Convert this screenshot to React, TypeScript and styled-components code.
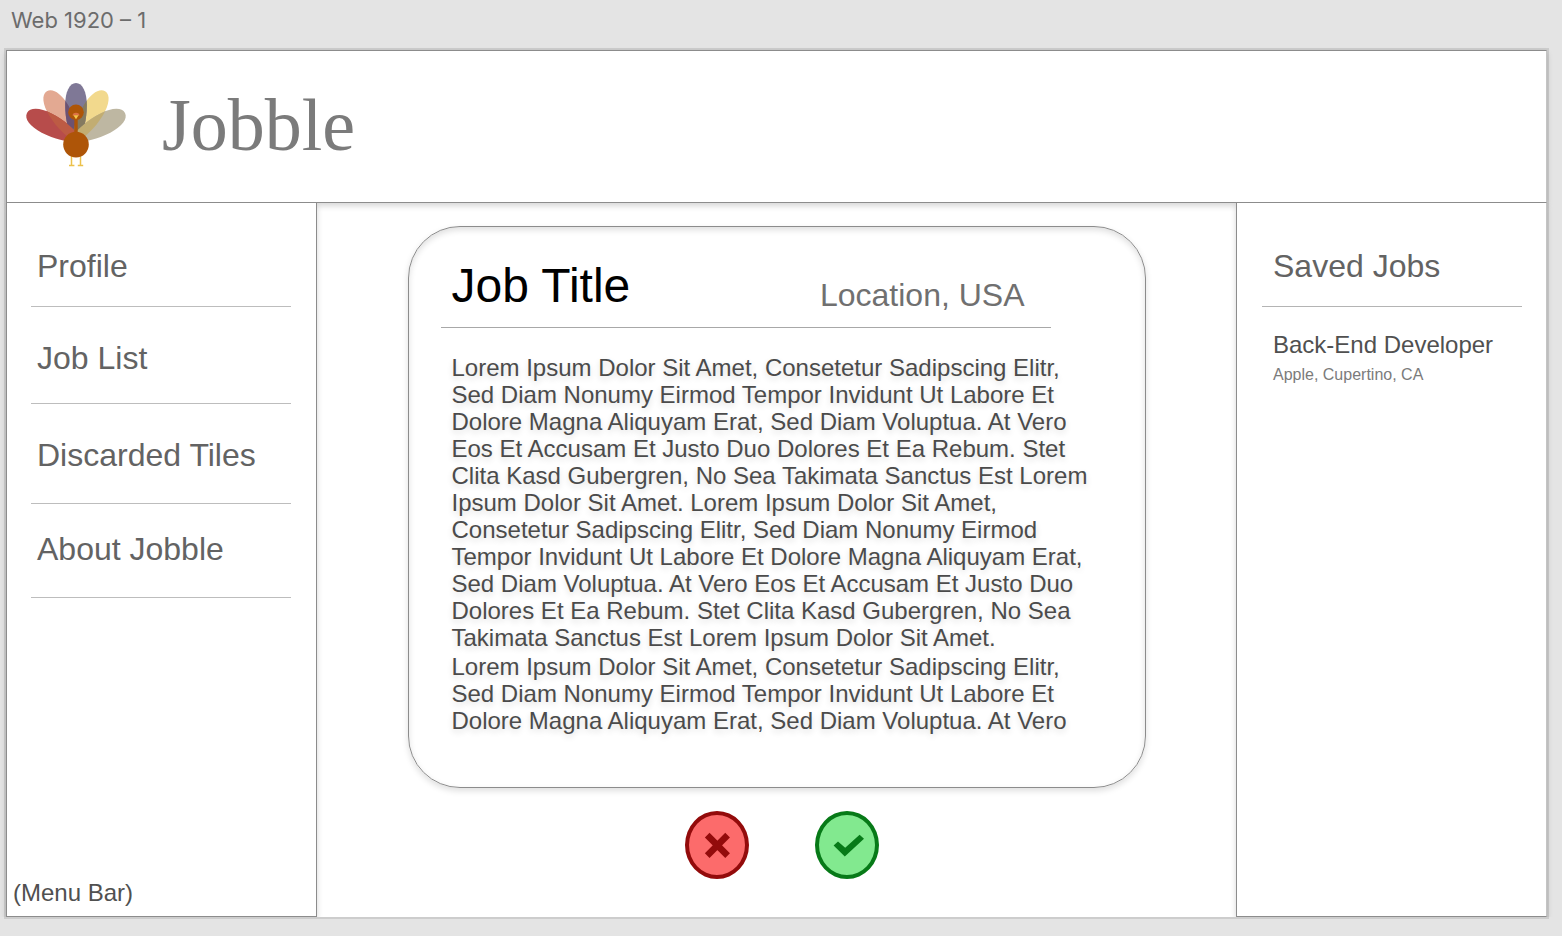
import React from "react";
import styled, { createGlobalStyle } from "styled-components";

const line = "#8c8c8c";

const GlobalStyle = createGlobalStyle`
  *, *::before, *::after { box-sizing: border-box; }
  body {
    margin: 0;
    background: #e4e4e4;
    font-family: "Liberation Sans", Arial, Helvetica, sans-serif;
  }
  h1, h2, h3, p, ul { margin: 0; padding: 0; font-weight: 400; }
`;

const Page = styled.div`
  min-height: 100vh;
  display: flex;
  flex-direction: column;
  padding: 0 13px 17px 4px;
`;

const ArtboardName = styled.p`
  height: 48px;
  padding: 6px 7px;
  font-family: Inter, "Open Sans", sans-serif;
  font-size: 22px;
  line-height: 28px;
  color: #6c6c6c;
`;

const Artboard = styled.div`
  flex: 1;
  display: flex;
  flex-direction: column;
  border: 2px solid #cdcdcd;
  background: #fff;
`;

const Header = styled.header`
  position: relative;
  display: flex;
  align-items: center;
  gap: 36px;
  height: 153px;
  padding: 0 19px 4px;
  border: 1px solid ${line};
  border-right-color: #c4c4c4;
  box-shadow: 0 3px 6px rgba(0, 0, 0, 0.16);
`;

const Brand = styled.h1`
  font-family: "Liberation Serif", "Times New Roman", serif;
  font-size: 74px;
  line-height: 84px;
  color: #7b7b7b;
`;

const Columns = styled.div`
  flex: 1;
  display: flex;
`;

const SidePanel = styled.aside`
  position: relative;
  flex: none;
  display: flex;
  flex-direction: column;
  width: 311px;
  padding-top: 45px;
  background: #fff;
  border: 1px solid ${line};
  border-top: 0;
  box-shadow: 0 3px 6px rgba(0, 0, 0, 0.16);
  clip-path: inset(0 -10px 0 -10px);
`;

const SavedPanel = styled(SidePanel)`
  border-right-color: #c4c4c4;
`;

const MenuList = styled.ul`
  list-style: none;
`;

const MenuItem = styled.li<{ $above: number; $below: number }>`
  margin: 0 25px 0 24px;
  padding: ${(p) => p.$above}px 0 ${(p) => p.$below}px 6px;
  border-bottom: 1px solid #bdbdbd;
  font-size: 32px;
  line-height: 36px;
  color: #636363;
`;

const MenuLink = styled.a`
  color: inherit;
  text-decoration: none;
`;

const MenuCaption = styled.p`
  margin-top: auto;
  padding: 0 6px 10px;
  font-size: 24px;
  line-height: 27px;
  color: #505050;
`;

const SavedHeading = styled.h2`
  margin: 0 24px 0 25px;
  padding: 0 0 22px 11px;
  border-bottom: 1px solid #b4b4b4;
  font-size: 32px;
  line-height: 36px;
  color: #636363;
`;

const SavedJob = styled.article`
  padding: 24px 24px 0 36px;
`;

const SavedTitle = styled.h3`
  font-size: 24px;
  line-height: 27px;
  color: #505050;
`;

const SavedPlace = styled.p`
  padding-top: 7px;
  font-size: 16px;
  line-height: 20px;
  color: #7b7b7b;
`;

const Main = styled.main`
  flex: 1;
  display: flex;
  flex-direction: column;
  align-items: center;
  padding: 23px 24px;
`;

const JobCard = styled.article`
  width: 100%;
  max-width: 738px;
  padding: 31px 32px 53px;
  border: 1px solid ${line};
  border-radius: 52px;
  box-shadow: 0 3px 6px rgba(0, 0, 0, 0.13), inset 0 3px 6px rgba(0, 0, 0, 0.13);
`;

const JobHeader = styled.header`
  display: flex;
  align-items: flex-end;
  justify-content: space-between;
  max-width: 610px;
  padding: 0 26px 13px 11px;
  border-bottom: 1px solid #a8a8a8;
`;

const JobTitle = styled.h2`
  font-size: 48px;
  line-height: 56px;
  color: #000;
`;

const JobPlace = styled.p`
  font-size: 32px;
  line-height: 38px;
  color: #707070;
`;

const JobText = styled.div`
  display: flex;
  flex-direction: column;
  gap: 2px;
  max-width: 660px;
  padding: 26px 0 0 11px;
  font-size: 24px;
  line-height: 27px;
  color: #4b4b4b;
  text-shadow: 0 3px 6px rgba(0, 0, 0, 0.14);
`;

const Actions = styled.div`
  display: flex;
  gap: 66px;
  padding: 23px 0 0 11px;
`;

const RoundButton = styled.button<{ $fill: string; $ink: string }>`
  display: flex;
  align-items: center;
  justify-content: center;
  width: 64px;
  height: 68px;
  padding: 0;
  border: 4px solid ${(p) => p.$ink};
  border-radius: 50%;
  background: ${(p) => p.$fill};
  color: ${(p) => p.$ink};
  cursor: pointer;
`;

const Turkey = styled.svg`
  flex: none;
  width: 100px;
  height: 84px;
  overflow: visible;
`;

const featherShape =
  "M50 0 C56.5 0 60.8 9 60.8 22 C60.8 37 57.5 48 53.5 57 H46.5 C42.5 48 39.2 37 39.2 22 C39.2 9 43.5 0 50 0 Z";

const turn = (angle: number) => `rotate(${angle} 50 55)`;

const feathers = [
  { id: "rose", color: "#e3a992", angle: -32 },
  { id: "gold", color: "#f2d98d", angle: 32 },
  { id: "plum", color: "#7f7896", angle: 0 },
  { id: "red", color: "#b74c4b", angle: -63 },
  { id: "sand", color: "#beb7a2", angle: 63 },
];

// Darker tints where two neighbouring feathers cross.
const crossings = [
  { inside: "rose", angle: 0, color: "#6c5272" },
  { inside: "gold", angle: 0, color: "#857a60" },
  { inside: "rose", angle: -63, color: "#bd5b44" },
  { inside: "gold", angle: 63, color: "#c2ad72" },
];

function TurkeyLogo() {
  return (
    <Turkey viewBox="0 0 100 84" role="img" aria-label="Turkey">
      <defs>
        {feathers.map((f) => (
          <clipPath key={f.id} id={`feather-${f.id}`}>
            <path d={featherShape} transform={turn(f.angle)} />
          </clipPath>
        ))}
      </defs>
      {feathers.map((f) => (
        <path key={f.id} d={featherShape} fill={f.color} transform={turn(f.angle)} />
      ))}
      {crossings.map((c) => (
        <g key={c.color} clipPath={`url(#feather-${c.inside})`}>
          <path d={featherShape} fill={c.color} transform={turn(c.angle)} />
        </g>
      ))}
      <g stroke="#ecc14b" strokeWidth="1.5" fill="none">
        <path d="M45.5 72V82.6M43 82.6H48.4M54.5 72V82.6M51.8 82.6H57.2" />
      </g>
      <rect x="48.3" y="33" width="3.4" height="20" fill="#ae5508" />
      <circle cx="50" cy="29.2" r="7.8" fill="#ae5508" />
      <circle cx="50" cy="61.6" r="12.8" fill="#ae5508" />
      <path d="M46.6 32.6A3.4 2.8 0 0 1 53.4 32.6Z" fill="#dc7245" />
      <path d="M47.4 32.2H52.6L50 36.2Z" fill="#f3c64c" />
    </Turkey>
  );
}

const menu = [
  { label: "Profile", above: 0, below: 22 },
  { label: "Job List", above: 33, below: 27 },
  { label: "Discarded Tiles", above: 33, below: 30 },
  { label: "About Jobble", above: 27, below: 30 },
];

const paragraphs = [
  "Lorem Ipsum Dolor Sit Amet, Consetetur Sadipscing Elitr, Sed Diam Nonumy Eirmod Tempor Invidunt Ut Labore Et Dolore Magna Aliquyam Erat, Sed Diam Voluptua. At Vero Eos Et Accusam Et Justo Duo Dolores Et Ea Rebum. Stet Clita Kasd Gubergren, No Sea Takimata Sanctus Est Lorem Ipsum Dolor Sit Amet. Lorem Ipsum Dolor Sit Amet, Consetetur Sadipscing Elitr, Sed Diam Nonumy Eirmod Tempor Invidunt Ut Labore Et Dolore Magna Aliquyam Erat, Sed Diam Voluptua. At Vero Eos Et Accusam Et Justo Duo Dolores Et Ea Rebum. Stet Clita Kasd Gubergren, No Sea Takimata Sanctus Est Lorem Ipsum Dolor Sit Amet.",
  "Lorem Ipsum Dolor Sit Amet, Consetetur Sadipscing Elitr, Sed Diam Nonumy Eirmod Tempor Invidunt Ut Labore Et Dolore Magna Aliquyam Erat, Sed Diam Voluptua. At Vero",
];

export default function App() {
  return (
    <>
      <GlobalStyle />
      <Page>
        <ArtboardName>Web 1920 – 1</ArtboardName>
        <Artboard>
          <Header>
            <TurkeyLogo />
            <Brand>Jobble</Brand>
          </Header>
          <Columns>
            <SidePanel as="nav" aria-label="Menu">
              <MenuList>
                {menu.map((m) => (
                  <MenuItem key={m.label} $above={m.above} $below={m.below}>
                    <MenuLink href="#">{m.label}</MenuLink>
                  </MenuItem>
                ))}
              </MenuList>
              <MenuCaption>(Menu Bar)</MenuCaption>
            </SidePanel>
            <Main>
              <JobCard>
                <JobHeader>
                  <JobTitle>Job Title</JobTitle>
                  <JobPlace>Location, USA</JobPlace>
                </JobHeader>
                <JobText>
                  {paragraphs.map((text) => (
                    <p key={text}>{text}</p>
                  ))}
                </JobText>
              </JobCard>
              <Actions>
                <RoundButton type="button" aria-label="Discard job" $fill="#fc6b6b" $ink="#930b0b">
                  <svg width="26" height="26" viewBox="0 0 26 26" aria-hidden="true">
                    <path d="M3.2 3.2L23.6 23.6M23.6 3.2L3.2 23.6" stroke="currentColor" strokeWidth="6.6" />
                  </svg>
                </RoundButton>
                <RoundButton type="button" aria-label="Save job" $fill="#82e98f" $ink="#077a18">
                  <svg width="36" height="24" viewBox="0 0 36 24" aria-hidden="true">
                    <path
                      d="M4.6 12.6L9 8.4L16.2 14.8L30.6 1.8L35 5.8L15.8 23.6Z"
                      fill="currentColor"
                    />
                  </svg>
                </RoundButton>
              </Actions>
            </Main>
            <SavedPanel>
              <SavedHeading>Saved Jobs</SavedHeading>
              <SavedJob>
                <SavedTitle>Back-End Developer</SavedTitle>
                <SavedPlace>Apple, Cupertino, CA</SavedPlace>
              </SavedJob>
            </SavedPanel>
          </Columns>
        </Artboard>
      </Page>
    </>
  );
}
